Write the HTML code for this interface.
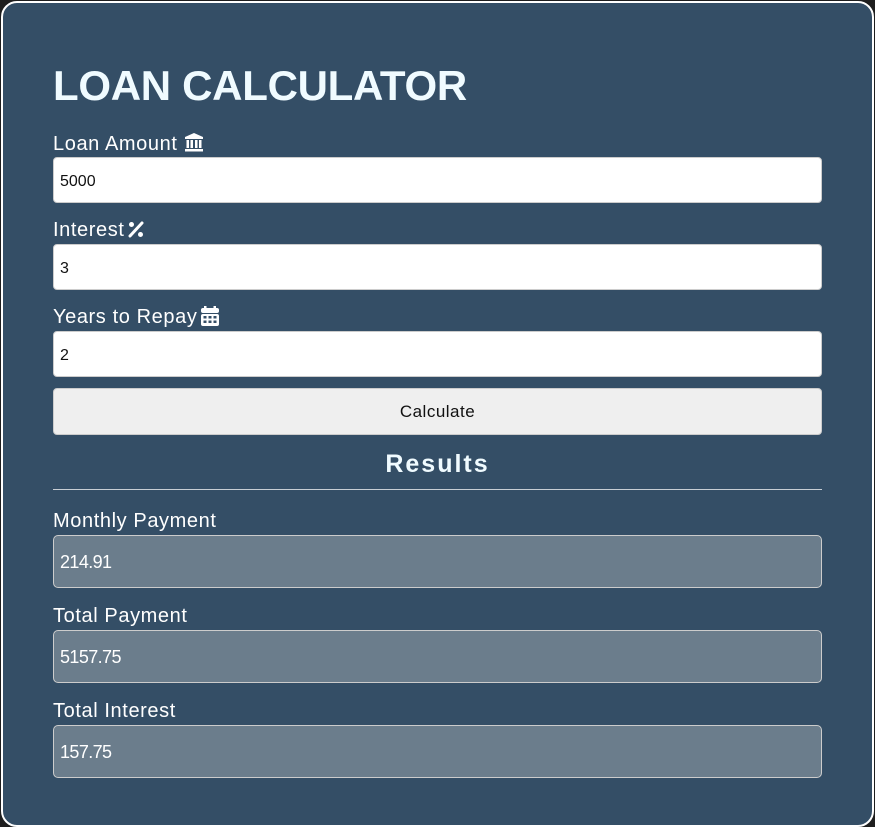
<!DOCTYPE html>
<html><head><style>
*{box-sizing:border-box;margin:0;padding:0}
body{width:875px;height:827px;background:#1e1e1e;font-family:"Liberation Sans",sans-serif;position:relative;overflow:hidden}
.card{position:absolute;left:1px;top:1px;width:873px;height:826px;background:#344e66;border:2px solid #fff;border-radius:16px}
.a{position:absolute}
h1{position:absolute;left:53px;top:62px;color:#f0fbff;font-size:42px;font-weight:bold;letter-spacing:-0.3px}
.lbl{position:absolute;left:53px;color:#fff;font-size:20px;letter-spacing:0.6px}
.in{position:absolute;left:53px;width:769px;height:46px;background:#fff;border:1px solid #ccc;border-radius:4px;font-size:16px;color:#111;padding:15px 0 0 6px}
.btn{position:absolute;left:53px;top:388px;width:769px;height:47px;background:#efefef;border:1px solid #ccc;border-radius:4px;font-size:17px;letter-spacing:0.5px;color:#111;text-align:center;line-height:46px}
.res{position:absolute;left:53px;width:769px;height:53px;background:#6b7d8c;border:1px solid #ccc;border-radius:5px;color:#fff;font-size:18px;letter-spacing:-0.6px;padding:16px 0 0 6px}
</style></head><body>
<div class="card"></div>
<h1>LOAN CALCULATOR</h1>
<div class="lbl" style="top:132px">Loan Amount <svg width="20" height="20" viewBox="0 0 20 20" style="vertical-align:-2px"><path d="M10 1L1 5v2h18V5z" fill="#fff"/><rect x="2.5" y="8" width="2.5" height="8" fill="#fff"/><rect x="6.5" y="8" width="2.5" height="8" fill="#fff"/><rect x="11" y="8" width="2.5" height="8" fill="#fff"/><rect x="15" y="8" width="2.5" height="8" fill="#fff"/><rect x="1" y="17" width="18" height="2.5" fill="#fff"/></svg></div>
<div class="in" style="top:157px">5000</div>
<div class="lbl" style="top:219px">Interest <svg width="16" height="18" viewBox="0 0 16 18" style="vertical-align:-2px;margin-left:-3px"><line x1="14" y1="3" x2="2" y2="16" stroke="#fff" stroke-width="3" stroke-linecap="round"/><circle cx="3.5" cy="4.5" r="2.5" fill="#fff"/><circle cx="12.5" cy="14.5" r="2.5" fill="#fff"/></svg></div>
<div class="in" style="top:244px">3</div>
<div class="lbl" style="top:306px">Years to Repay <svg width="18" height="20" viewBox="0 0 18 20" style="vertical-align:-3px;margin-left:-3px"><rect x="3" y="0" width="2.5" height="4" fill="#fff"/><rect x="12.5" y="0" width="2.5" height="4" fill="#fff"/><rect x="0" y="2" width="18" height="5" rx="2" fill="#fff"/><rect x="0" y="8" width="18" height="12" rx="2" fill="#fff"/><g fill="#344e66"><rect x="2.5" y="10" width="3" height="2.5"/><rect x="7.5" y="10" width="3" height="2.5"/><rect x="12.5" y="10" width="3" height="2.5"/><rect x="2.5" y="14.5" width="3" height="2.5"/><rect x="7.5" y="14.5" width="3" height="2.5"/><rect x="12.5" y="14.5" width="3" height="2.5"/></g></svg></div>
<div class="in" style="top:331px">2</div>
<div class="btn">Calculate</div>
<div class="a" style="left:53px;top:450px;width:769px;text-align:center;color:#f0fbff;font-size:25px;font-weight:bold;letter-spacing:2px">Results</div>
<div class="a" style="left:53px;top:489px;width:769px;height:1px;background:#c8ced4"></div>
<div class="lbl" style="top:510px">Monthly Payment</div>
<div class="res" style="top:535px">214.91</div>
<div class="lbl" style="top:605px">Total Payment</div>
<div class="res" style="top:630px">5157.75</div>
<div class="lbl" style="top:700px">Total Interest</div>
<div class="res" style="top:725px">157.75</div>
</body></html>
